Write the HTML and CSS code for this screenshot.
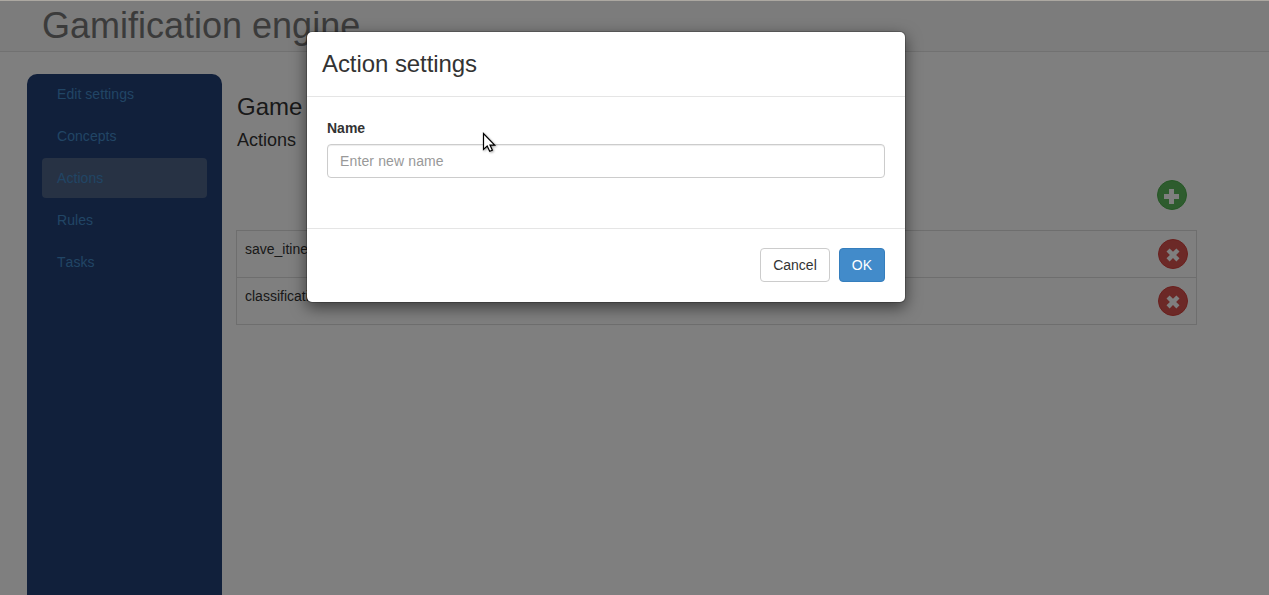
FILE: index.html
```html
<!DOCTYPE html>
<html lang="en">
<head>
<meta charset="utf-8">
<title>Gamification engine</title>
<link rel="stylesheet" href="styles.css">
</head>
<body>
<div class="page">
  <header class="navbar"><div class="brand">Gamification engine</div></header>
  <div class="layout">
    <nav class="sidebar">
      <a class="nav-item">Edit settings</a>
      <a class="nav-item">Concepts</a>
      <a class="nav-item active">Actions</a>
      <a class="nav-item">Rules</a>
      <a class="nav-item">Tasks</a>
    </nav>
    <main class="content">
      <h3 class="title">Game</h3>
      <h4 class="subtitle">Actions</h4>
      <div class="toolbar">
        <button class="circle add" aria-label="Add"><svg width="30" height="30" viewBox="0 0 30 30"><path d="M12 9h5v5h5v5h-5v5h-5v-5h-5v-5h5z" fill="#fff"/></svg></button>
      </div>
      <div class="table">
        <div class="row"><span>save_itinerary</span><button class="circle remove" aria-label="Delete"><svg width="30" height="30" viewBox="0 0 30 30"><path d="M11.6 9.4l3.4 3.4 3.4-3.4 3.1 3.1-3.4 3.4 3.4 3.4-3.1 3.1-3.4-3.4-3.4 3.4-3.1-3.1 3.4-3.4-3.4-3.4z" fill="#fff"/></svg></button></div>
        <div class="row"><span>classification</span><button class="circle remove" aria-label="Delete"><svg width="30" height="30" viewBox="0 0 30 30"><path d="M11.6 9.4l3.4 3.4 3.4-3.4 3.1 3.1-3.4 3.4 3.4 3.4-3.1 3.1-3.4-3.4-3.4 3.4-3.1-3.1 3.4-3.4-3.4-3.4z" fill="#fff"/></svg></button></div>
      </div>
    </main>
  </div>
</div>
<div class="backdrop">
  <section class="modal" role="dialog">
    <div class="modal-header"><h3 class="modal-title">Action settings</h3></div>
    <div class="modal-body">
      <label class="label" for="name">Name</label>
      <input class="input" id="name" type="text" placeholder="Enter new name">
    </div>
    <div class="modal-footer">
      <button class="btn">Cancel</button>
      <button class="btn primary">OK</button>
    </div>
  </section>
</div>
<svg class="cursor" width="16" height="24" viewBox="0 0 16 24"><path d="M1.5 1.5v16l3.7-3.4 2.5 5.2 2.7-1.1-2.4-5.1h4.7z" fill="#fff" stroke="#000" stroke-width="1.2"/></svg>
</body>
</html>
```
FILE: styles.css
```css
* { box-sizing: border-box; }
body {
  margin: 0;
  height: 595px;
  overflow: hidden;
  background: #fff;
  color: #333;
  font: 14px/20px "Liberation Sans", Arial, sans-serif;
}
button { font: inherit; margin: 0; }
.page { height: 595px; overflow: hidden; }
.navbar {
  height: 52px;
  padding-left: 42px;
  background: #f8f8f8;
  border-bottom: 1px solid #e2e2e2;
}
.brand { font-size: 36px; line-height: 52px; color: #777; }
.layout { display: flex; margin-top: 22px; }
.sidebar {
  display: flex;
  flex-direction: column;
  gap: 2px;
  width: 195px;
  height: 540px;
  margin-left: 27px;
  padding: 0 15px;
  border-radius: 10px;
  background: #224076;
}
.nav-item {
  height: 40px;
  padding: 10px 15px;
  border-radius: 4px;
  color: #428bca;
  font-kerning: none;
  letter-spacing: .06px;
}
.nav-item.active { background: #4e6488; }
.content { width: 961px; margin-left: 14px; padding-top: 20px; }
.title { margin: 0 0 0 1px; font-size: 24px; line-height: 26px; font-weight: 400; }
.subtitle { margin: 10px 0 0 1px; font-size: 18px; line-height: 20px; font-weight: 400; }
.title, .subtitle { color: #333; }
.toolbar { display: flex; justify-content: flex-end; margin-top: 30px; padding-right: 10px; }
.circle {
  display: block;
  width: 30px;
  height: 30px;
  padding: 0;
  border-radius: 50%;
}
.circle svg { display: block; margin: -1px; }
.add { background: #5cb85c; border: 1px solid #4cae4c; }
.remove { background: #d9534f; border: 1px solid #d43f3a; }
.table { margin-top: 20px; border: 1px solid #ddd; }
.row {
  display: flex;
  align-items: flex-start;
  justify-content: space-between;
  height: 46px;
  padding: 8px;
}
.row + .row { height: 47px; border-top: 1px solid #ddd; }
.row span { line-height: 20px; }
.backdrop {
  position: absolute;
  inset: 0;
  background: rgba(0, 0, 0, .5);
  border-top: 1px solid #aca8a1;
}
.modal {
  width: 600px;
  height: 272px;
  margin: 30px 0 0 306px;
  background: #fff;
  background-clip: padding-box;
  border: 1px solid rgba(0, 0, 0, .2);
  border-radius: 6px;
  box-shadow: 0 5px 15px rgba(0, 0, 0, .5);
}
.modal-header { height: 65px; padding: 19px 15px; border-bottom: 1px solid #e5e5e5; }
.modal-title { margin: 0; font-size: 24px; line-height: 26px; font-weight: 400; letter-spacing: -.07px; }
.modal-body { height: 131px; padding: 21px 20px; }
.label { display: block; margin-bottom: 6px; font-weight: 700; }
.input {
  display: block;
  width: 100%;
  height: 34px;
  padding: 6px 12px;
  border: 1px solid #ccc;
  border-radius: 4px;
  box-shadow: inset 0 1px 1px rgba(0, 0, 0, .075);
  font: inherit;
}
.input::placeholder { color: #999; opacity: 1; letter-spacing: .13px; }
.modal-footer {
  display: flex;
  justify-content: flex-end;
  gap: 9px;
  height: 74px;
  padding: 19px 20px;
  border-top: 1px solid #e5e5e5;
}
.btn {
  height: 34px;
  padding: 6px 12px;
  border: 1px solid #ccc;
  border-radius: 4px;
  background: #fff;
  color: #333;
}
.btn.primary { background: #428bca; border-color: #357ebd; color: #fff; }
.cursor {
  position: absolute;
  left: 482px;
  top: 132px;
  filter: drop-shadow(1px 1px 1px rgba(0, 0, 0, .35));
}
```
